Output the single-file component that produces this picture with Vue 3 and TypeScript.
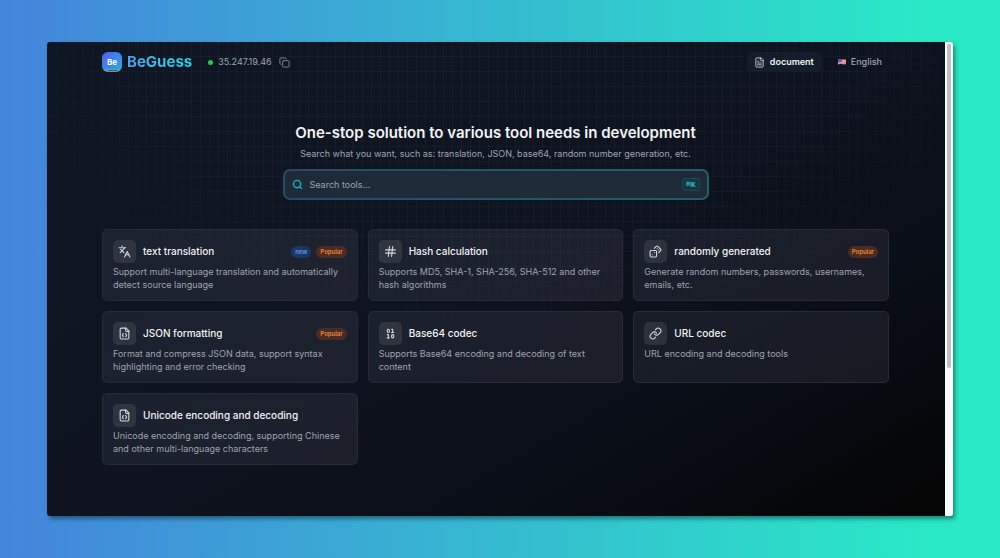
<script setup lang="ts">
import { ref } from 'vue'

interface Badge {
  text: string
  kind: 'new' | 'popular'
}
interface Tool {
  title: string
  description: string
  icon: string
  badges: Badge[]
}

const query = ref('')
const isNew: Badge = { text: 'new', kind: 'new' }
const popular: Badge = { text: 'Popular', kind: 'popular' }

const tools: Tool[] = [
  {
    title: 'text translation',
    description: 'Support multi-language translation and automatically detect source language',
    icon: 'languages',
    badges: [isNew, popular],
  },
  {
    title: 'Hash calculation',
    description: 'Supports MD5, SHA-1, SHA-256, SHA-512 and other hash algorithms',
    icon: 'hash',
    badges: [],
  },
  {
    title: 'randomly generated',
    description: 'Generate random numbers, passwords, usernames, emails, etc.',
    icon: 'dices',
    badges: [popular],
  },
  {
    title: 'JSON formatting',
    description: 'Format and compress JSON data, support syntax highlighting and error checking',
    icon: 'json',
    badges: [popular],
  },
  {
    title: 'Base64 codec',
    description: 'Supports Base64 encoding and decoding of text content',
    icon: 'binary',
    badges: [],
  },
  {
    title: 'URL codec',
    description: 'URL encoding and decoding tools',
    icon: 'link',
    badges: [],
  },
  {
    title: 'Unicode encoding and decoding',
    description: 'Unicode encoding and decoding, supporting Chinese and other multi-language characters',
    icon: 'json',
    badges: [],
  },
]

const iconPaths: Record<string, string[]> = {
  languages: ['m5 8 6 6', 'm4 14 6-6 2-3', 'M2 5h12', 'M7 2h1', 'm22 22-5-10-5 10', 'M14 18h6'],
  hash: ['M3 9h18', 'M3 15h18', 'M10 3 8 21', 'M16 3l-2 18'],
  dices: [
    'M4 10h8a2 2 0 0 1 2 2v8a2 2 0 0 1-2 2H4a2 2 0 0 1-2-2v-8a2 2 0 0 1 2-2z',
    'm17.92 14 3.5-3.5a2.24 2.24 0 0 0 0-3l-5-4.92a2.24 2.24 0 0 0-3 0L10 6',
    'M6 18h.01',
    'M10 14h.01',
    'M15 6h.01',
    'M18 9h.01',
  ],
  json: [
    'M15 2H6a2 2 0 0 0-2 2v16a2 2 0 0 0 2 2h12a2 2 0 0 0 2-2V7z',
    'M14 2v4a2 2 0 0 0 2 2h4',
    'M10 12a1 1 0 0 0-1 1v1a1 1 0 0 1-1 1 1 1 0 0 1 1 1v1a1 1 0 0 0 1 1',
    'M14 18a1 1 0 0 0 1-1v-1a1 1 0 0 1 1-1 1 1 0 0 1-1-1v-1a1 1 0 0 0-1-1',
  ],
  binary: [
    'M8 4a2 2 0 0 1 2 2v2a2 2 0 0 1-4 0V6a2 2 0 0 1 2-2z',
    'M16 14a2 2 0 0 1 2 2v2a2 2 0 0 1-4 0v-2a2 2 0 0 1 2-2z',
    'M6 20h4',
    'M14 10h4',
    'M6 14h2v6',
    'M14 4h2v6',
  ],
  link: [
    'M10 13a5 5 0 0 0 7.54.54l3-3a5 5 0 0 0-7.07-7.07l-1.72 1.71',
    'M14 11a5 5 0 0 0-7.54-.54l-3 3a5 5 0 0 0 7.07 7.07l1.71-1.71',
  ],
}
</script>

<template>
  <div class="stage">
    <div class="window">
      <div class="page">
        <header class="topbar">
          <a class="brand" href="#">
            <span class="logo" aria-hidden="true"><span class="logo-text">Be</span></span>
            <span class="brand-name">BeGuess</span>
          </a>
          <div class="ip">
            <span class="dot"></span>
            <span>35.247.19.46</span>
            <button class="copy" type="button" aria-label="Copy IP address">
              <svg class="icon" viewBox="0 0 24 24">
                <rect x="8" y="8" width="14" height="14" rx="2" />
                <path d="M4 16a2 2 0 0 1-2-2V4a2 2 0 0 1 2-2h10a2 2 0 0 1 2 2" />
              </svg>
            </button>
          </div>
          <nav class="nav">
            <a class="nav-item active" href="#">
              <svg class="icon" viewBox="0 0 24 24">
                <path d="M15 2H6a2 2 0 0 0-2 2v16a2 2 0 0 0 2 2h12a2 2 0 0 0 2-2V7z" />
                <path d="M14 2v4a2 2 0 0 0 2 2h4M8 9h2M8 13h8M8 17h8" />
              </svg>
              document
            </a>
            <button class="nav-item" type="button">
              <svg class="flag" viewBox="0 0 16 12">
                <path fill="#f0dfe2" d="M0 2q4-2 8-1t8 0v9q-4 1-8 0t-8 1z" />
                <path
                  fill="none"
                  stroke="#e0454f"
                  stroke-width="1.3"
                  d="M0 2.2q4-2 8-1t8 0M0 4.8q4-2 8-1t8 0M0 7.4q4-2 8-1t8 0M0 10q4-2 8-1t8 0"
                />
                <path fill="#3467b8" d="M0 2q4-2 8-1v5q-4-1-8 1z" />
              </svg>
              English
            </button>
          </nav>
        </header>

        <main>
          <section class="hero">
            <h1>One-stop solution to various tool needs in development</h1>
            <p>Search what you want, such as: translation, JSON, base64, random number generation, etc.</p>
            <label class="search">
              <svg class="icon" viewBox="0 0 24 24">
                <circle cx="11" cy="11" r="8" />
                <path d="m21 21-4.3-4.3" />
              </svg>
              <input v-model="query" type="text" placeholder="Search tools..." aria-label="Search tools" />
              <kbd>⌘K</kbd>
            </label>
          </section>

          <section class="grid">
            <a v-for="tool in tools" :key="tool.title" class="card" href="#">
              <div class="card-head">
                <span class="tile">
                  <svg class="icon" viewBox="0 0 24 24">
                    <path v-for="d in iconPaths[tool.icon]" :key="d" :d="d" />
                  </svg>
                </span>
                <h2>{{ tool.title }}</h2>
                <span v-for="badge in tool.badges" :key="badge.text" class="badge" :class="badge.kind">{{
                  badge.text
                }}</span>
              </div>
              <p>{{ tool.description }}</p>
            </a>
          </section>
        </main>
      </div>
      <div class="scrollbar"><div class="thumb"></div></div>
    </div>
  </div>
</template>

<style>
body {
  margin: 0;
}
</style>

<style scoped>
* {
  box-sizing: border-box;
}
.stage {
  display: flex;
  min-height: 100vh;
  padding: 42px 47px;
  background: linear-gradient(90deg, #4484dc, #29e8c6 92%);
  font-family: Inter, 'Liberation Sans', sans-serif;
  font-size: 9px;
  color: #9fa5b0;
}
.window {
  display: flex;
  flex: 1;
  min-width: 0;
  overflow: hidden;
  border-radius: 3px;
  box-shadow: 2px 3px 4px rgba(0, 40, 50, 0.5);
}
.page {
  position: relative;
  flex: 1;
  min-width: 0;
  padding: 0 56px 51px 55px;
  background: linear-gradient(150deg, #0f1623 0%, #0e131f 50%, #090d16 76%, #050506 96%);
}
.page::before {
  content: '';
  position: absolute;
  inset: 0;
  background-image:
    linear-gradient(90deg, rgba(130, 150, 180, 0.06) 1px, transparent 1px),
    linear-gradient(0deg, rgba(130, 150, 180, 0.06) 1px, transparent 1px);
  background-size: 9px 15px;
  mask-image: radial-gradient(ellipse 60% 65% at 50% 0%, #000 60%, transparent 100%);
  pointer-events: none;
}
.icon {
  display: block;
  width: 13px;
  height: 13px;
  flex: none;
  fill: none;
  stroke: currentColor;
  stroke-width: 2;
  stroke-linecap: round;
  stroke-linejoin: round;
}
a {
  color: inherit;
  text-decoration: none;
}
button {
  border: 0;
  padding: 0;
  background: none;
  color: inherit;
  font: inherit;
  cursor: pointer;
}
.topbar {
  position: relative;
  display: flex;
  align-items: center;
  height: 40px;
}
.brand {
  display: flex;
  align-items: center;
  gap: 5px;
}
.logo {
  display: flex;
  align-items: center;
  justify-content: center;
  width: 20px;
  height: 20px;
  border-radius: 6px;
  background:
    linear-gradient(#3c5663, #3c5663) center 18px / 9px 1px no-repeat,
    linear-gradient(#6f98a8, #6f98a8) bottom / 100% 3px no-repeat,
    linear-gradient(135deg, #5b5cf0, #3a86f3 50%, #1fb4d8);
}
.logo-text {
  font-size: 8px;
  font-weight: 700;
  color: #fff;
}
.brand-name {
  font-size: 15px;
  font-weight: 700;
  line-height: 20px;
  background: linear-gradient(90deg, #4f9fea, #22dbe8);
  background-clip: text;
  color: transparent;
}
.ip {
  display: flex;
  align-items: center;
  gap: 5px;
  margin-left: 16px;
  line-height: 12px;
}
.dot {
  width: 5px;
  height: 5px;
  border-radius: 50%;
  background: #22c55e;
}
.copy {
  margin-left: 2px;
  color: #858b97;
}
.copy .icon {
  width: 11px;
  height: 11px;
}
.nav {
  display: flex;
  gap: 10px;
  margin-left: auto;
}
.nav-item {
  display: flex;
  align-items: center;
  gap: 5px;
  height: 20px;
  padding: 0 7px;
  border-radius: 5px;
  font-weight: 500;
  line-height: 12px;
}
.nav-item.active {
  background: #141e2a;
  color: #eef0f3;
  font-weight: 600;
}
.nav-item .icon {
  width: 11px;
  height: 11px;
  color: #c9cdd4;
}
.flag {
  width: 8px;
  height: 6px;
}
.hero {
  position: relative;
  display: flex;
  flex-direction: column;
  align-items: center;
  padding: 40px 0 29px;
  text-align: center;
}
h1 {
  margin: 0;
  font-size: 15px;
  font-weight: 600;
  line-height: 22px;
  color: #f3f4f6;
}
.hero p {
  margin: 3px 0 9px;
  line-height: 13px;
}
.search {
  display: flex;
  align-items: center;
  gap: 7px;
  width: 100%;
  max-width: 426px;
  height: 31px;
  padding: 0 7px;
  border: 2px solid transparent;
  border-radius: 7px;
  background:
    linear-gradient(#1f2a38, #1f2b38) padding-box,
    linear-gradient(90deg, #27496b, #1f6068) border-box;
  color: #14b8c4;
}
.search .icon {
  width: 11px;
  height: 11px;
  stroke-width: 3;
}
.search input {
  flex: 1;
  min-width: 0;
  padding: 0;
  border: 0;
  outline: 0;
  background: none;
  font: inherit;
  color: #e5e7eb;
}
.search input::placeholder {
  color: #9ca3af;
  opacity: 1;
}
kbd {
  padding: 0 3px;
  border: 1px solid #1c4a56;
  border-radius: 3px;
  background: #1c3340;
  font-family: 'Liberation Mono', 'DejaVu Sans Mono', monospace;
  font-size: 8px;
  font-weight: 700;
  line-height: 11px;
  color: #19c6d6;
}
.grid {
  position: relative;
  display: grid;
  grid-template-columns: repeat(3, minmax(0, 1fr));
  gap: 10px;
}
.card {
  min-height: 72px;
  padding: 10px 10px 9px;
  border: 1px solid #262b36;
  border-radius: 5px;
  background: linear-gradient(135deg, rgba(148, 163, 184, 0.09), rgba(160, 150, 165, 0.11));
}
.card-head {
  display: flex;
  align-items: center;
  gap: 5px;
  margin-bottom: 2px;
}
.tile {
  display: grid;
  place-items: center;
  width: 23px;
  height: 23px;
  border-radius: 5px;
  background: rgba(255, 255, 255, 0.09);
  color: #d5d8de;
}
h2 {
  flex: 1;
  margin: 0 0 0 2px;
  font-size: 10px;
  font-weight: 500;
  line-height: 15px;
  color: #f1f2f5;
}
.card p {
  margin: 0;
  line-height: 13px;
}
.badge {
  padding: 0 4px;
  border-radius: 6px;
  font-size: 6px;
  font-weight: 600;
  line-height: 12px;
}
.badge.new {
  background: #1f3560;
  color: #5a9cf0;
}
.badge.popular {
  background: #4a2c24;
  color: #ee8534;
}
.scrollbar {
  flex: none;
  width: 8px;
  padding: 2px;
  background: #fafafa;
}
.thumb {
  height: 69%;
  border-radius: 3px;
  background: #bfbfbf;
}
</style>
